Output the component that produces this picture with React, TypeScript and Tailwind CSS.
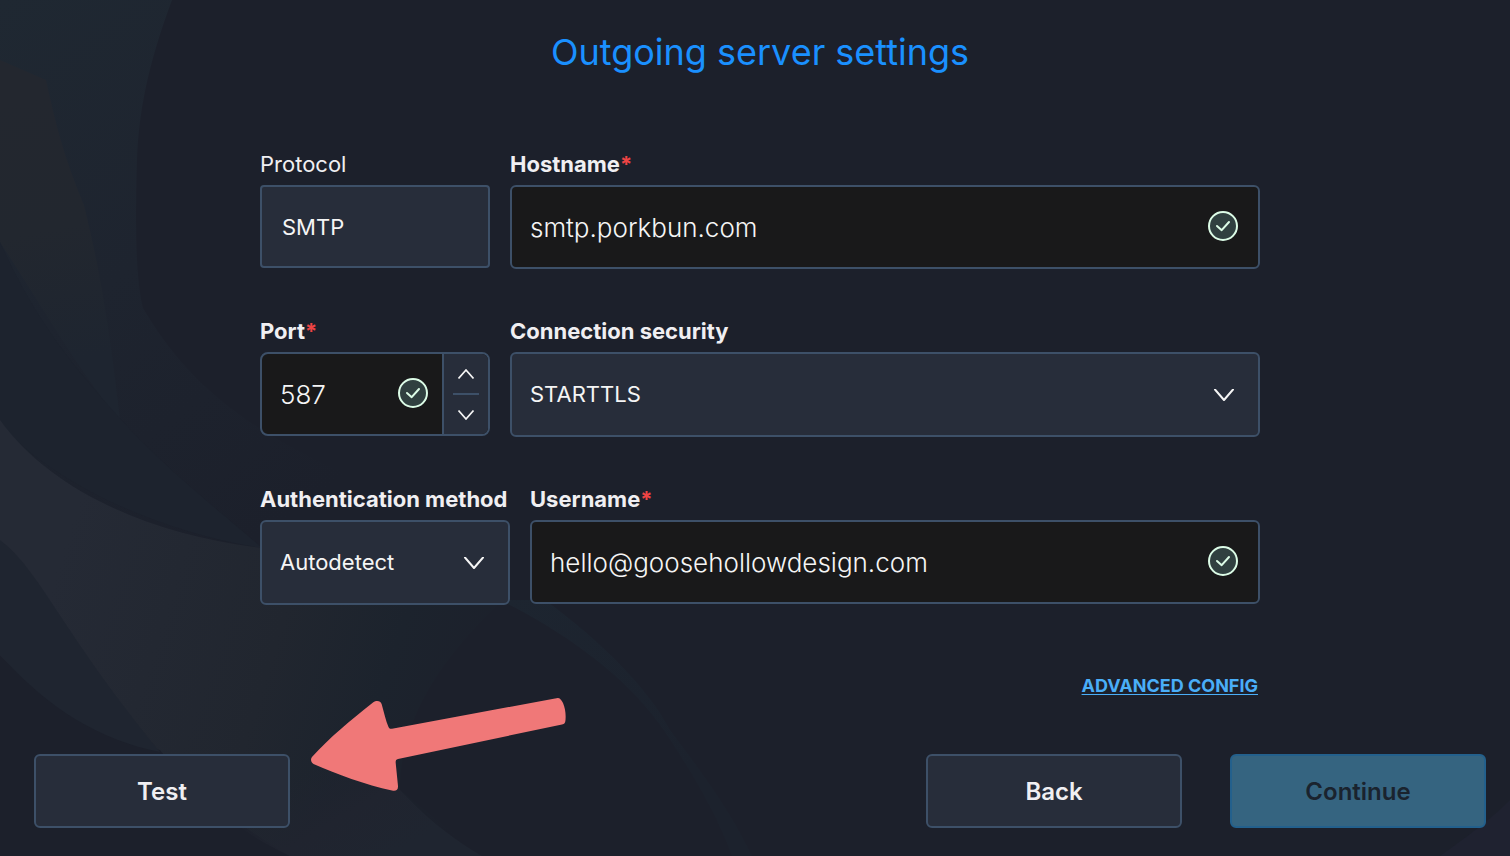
import { useState } from "react"
import type { ReactNode } from "react"

const fieldBox = "w-full rounded-md border-2 border-[#3d5068] text-[#f5f5f5] outline-none"
const textBox = `${fieldBox} h-[84px] bg-[#19191a] px-[18px] text-[26px] font-light`
const selectBox = `${fieldBox} h-[85px] appearance-none bg-[#272d3a] px-[18px] text-[22px]`
const footerButton =
  "h-[74px] w-64 rounded-md border-2 border-[#3d5068] bg-[#272d3a] pt-[2px] text-2xl font-semibold text-[#f0eff2]"

function Backdrop() {
  return (
    <svg
      className="pointer-events-none absolute inset-0 h-full w-full"
      viewBox="0 0 1510 856"
      preserveAspectRatio="none"
      aria-hidden="true"
    >
      <defs>
        <linearGradient id="upper" x1="0" y1="0" x2="340" y2="480" gradientUnits="userSpaceOnUse">
          <stop offset="0" stopColor="#1f2832" />
          <stop offset="0.5" stopColor="#1e242f" />
          <stop offset="1" stopColor="#1c202b" />
        </linearGradient>
        <linearGradient id="wing" x1="20" y1="100" x2="70" y2="360" gradientUnits="userSpaceOnUse">
          <stop offset="0" stopColor="#23272f" />
          <stop offset="0.5" stopColor="#22272f" />
          <stop offset="1" stopColor="#1e2530" />
        </linearGradient>
        <linearGradient id="lower" x1="60" y1="560" x2="500" y2="700" gradientUnits="userSpaceOnUse">
          <stop offset="0" stopColor="#252a35" />
          <stop offset="0.5" stopColor="#21262f" />
          <stop offset="0.75" stopColor="#1c232d" />
          <stop offset="1" stopColor="#1c202b" />
        </linearGradient>
        <linearGradient id="tail" x1="340" y1="750" x2="400" y2="850" gradientUnits="userSpaceOnUse">
          <stop offset="0" stopColor="#20242f" stopOpacity="0" />
          <stop offset="0.5" stopColor="#20242f" />
          <stop offset="1" stopColor="#1f2530" />
        </linearGradient>
        <linearGradient id="streak" x1="500" y1="605" x2="700" y2="760" gradientUnits="userSpaceOnUse">
          <stop offset="0" stopColor="#1d2530" />
          <stop offset="1" stopColor="#1c222d" />
        </linearGradient>
      </defs>
      <path
        d="M0 0H172C148 65 139 110 137 160C135 230 136 280 143 308C180 370 230 425 360 480L400 560H262C150 540 60 500 0 424Z"
        fill="url(#upper)"
      />
      <path d="M0 60L46 80C55 120 62 152 84 205C100 270 110 330 120 420C85 380 50 320 0 242Z" fill="url(#wing)" />
      <path d="M0 242C40 330 80 375 140 440C180 480 230 520 262 548C150 530 50 480 0 424Z" fill="#1d232e" />
      <path
        d="M0 420C50 490 150 535 262 548L500 603C440 660 400 720 400 790L482 856H290C240 825 200 800 160 750C110 740 60 715 0 655Z"
        fill="url(#lower)"
      />
      <path d="M240 740H350C375 762 390 780 400 790C430 822 455 840 482 856H290C270 846 255 838 240 827Z" fill="url(#tail)" />
      <path d="M0 540C40 570 60 630 160 752C100 740 50 710 0 655Z" fill="#1f2530" />
      <path
        d="M500 600L545 600C600 640 650 690 670 730C712 785 735 820 752 856H732C715 810 690 770 665 732C630 680 570 635 500 600Z"
        fill="url(#streak)"
      />
      <path d="M1440 856C1465 838 1490 820 1510 800V856Z" fill="#1f2230" />
    </svg>
  )
}

function ValidIcon({ className }: { className: string }) {
  return (
    <svg
      className={`pointer-events-none absolute h-8 w-8 ${className}`}
      viewBox="0 0 32 32"
      fill="none"
      stroke="#dcfce7"
      strokeWidth="2"
      strokeLinecap="round"
      strokeLinejoin="round"
      aria-hidden="true"
    >
      <circle cx="16" cy="16" r="14" fill="#304040" />
      <path d="M10 16L14.7 20.2L22 12" />
    </svg>
  )
}

function SelectArrow() {
  return (
    <svg
      className="pointer-events-none absolute right-[25px] top-[37px] h-3 w-[22px]"
      viewBox="0 0 22 12"
      fill="none"
      stroke="#f5f5f5"
      strokeWidth="2"
      strokeLinecap="round"
      strokeLinejoin="round"
      aria-hidden="true"
    >
      <path d="M2 0.5L11 11L20 0.5" />
    </svg>
  )
}

function StepArrow({ up }: { up?: boolean }) {
  return (
    <svg className="h-3 w-[18px]" viewBox="0 0 18 12" fill="none" stroke="#f5f5f5" strokeWidth="1.8" aria-hidden="true">
      <path d={up ? "M1.5 10.5L9 2L16.5 10.5" : "M1.5 1.5L9 10L16.5 1.5"} />
    </svg>
  )
}

type FieldProps = {
  id: string
  label: string
  required?: boolean
  light?: boolean
  className: string
  children: ReactNode
}

function Field({ id, label, required, light, className, children }: FieldProps) {
  return (
    <div className={className}>
      <label
        htmlFor={id}
        className={`mb-[5px] block whitespace-nowrap text-[22px] leading-8 text-[#f0eff2] ${light ? "font-normal" : "font-bold"}`}
      >
        {label}
        {required && <span className="text-[#ef4444]">*</span>}
      </label>
      <div className="relative">{children}</div>
    </div>
  )
}

export default function App() {
  const [hostname, setHostname] = useState("smtp.porkbun.com")
  const [port, setPort] = useState(587)
  const [username, setUsername] = useState("hello@goosehollowdesign.com")

  return (
    <div className="relative min-h-screen overflow-hidden bg-[#1c202b] font-['Inter',sans-serif]">
      <Backdrop />

      <main className="relative pb-7 pl-[34px] pr-6 pt-7">
        <h1 className="text-center text-4xl leading-[48px] text-[#1a90ff]">Outgoing server settings</h1>

        <form className="mx-auto mt-[72px] flex max-w-[1000px] flex-col gap-[46px]">
          <div className="flex gap-5">
            <Field id="protocol" label="Protocol" light className="w-[230px]">
              <input
                id="protocol"
                readOnly
                value="SMTP"
                className="h-[83px] w-full rounded-sm border-2 border-[#3d5068] bg-[#272d3a] px-5 text-[22px] text-[#f5f5f5] outline-none"
              />
            </Field>
            <Field id="hostname" label="Hostname" required className="flex-1">
              <input id="hostname" value={hostname} onChange={(e) => setHostname(e.target.value)} className={textBox} />
              <ValidIcon className="right-[21px] top-[25px]" />
            </Field>
          </div>

          <div className="flex gap-5">
            <Field id="port" label="Port" required className="w-[230px]">
              <div className="flex h-[84px] overflow-hidden rounded-lg border-2 border-[#3d5068] bg-[#19191a]">
                <div className="relative flex-1">
                  <input
                    id="port"
                    inputMode="numeric"
                    value={port}
                    onChange={(e) => setPort(Number(e.target.value) || 0)}
                    className="h-full w-full px-[18px] text-[26px] font-light text-[#f5f5f5] outline-none"
                  />
                  <ValidIcon className="right-[13px] top-[23px]" />
                </div>
                <div className="flex w-[46px] flex-col items-center border-l-2 border-[#3d5068] bg-[#272d3a]">
                  <button
                    type="button"
                    aria-label="Increase port"
                    onClick={() => setPort(port + 1)}
                    className="flex w-full flex-1 items-center justify-center"
                  >
                    <StepArrow up />
                  </button>
                  <span className="h-[2px] w-[26px] bg-[#3d5068]" />
                  <button
                    type="button"
                    aria-label="Decrease port"
                    onClick={() => setPort(port - 1)}
                    className="flex w-full flex-1 items-center justify-center"
                  >
                    <StepArrow />
                  </button>
                </div>
              </div>
            </Field>
            <Field id="security" label="Connection security" className="flex-1">
              <select id="security" className={selectBox}>
                <option>STARTTLS</option>
                <option>SSL/TLS</option>
                <option>None</option>
              </select>
              <SelectArrow />
            </Field>
          </div>

          <div className="flex gap-5">
            <Field id="auth" label="Authentication method" className="w-[250px]">
              <select id="auth" className={selectBox}>
                <option>Autodetect</option>
                <option>Normal password</option>
              </select>
              <SelectArrow />
            </Field>
            <Field id="username" label="Username" required className="flex-1">
              <input id="username" value={username} onChange={(e) => setUsername(e.target.value)} className={textBox} />
              <ValidIcon className="right-[21px] top-[25px]" />
            </Field>
          </div>
        </form>

        <div className="mx-auto mt-[69px] flex max-w-[1000px] justify-end pr-[2px]">
          <a
            href="#advanced"
            className="text-lg leading-6 font-bold text-[#4aaef8] underline decoration-1 underline-offset-2"
          >
            ADVANCED CONFIG
          </a>
        </div>

        <footer className="mt-14 flex items-center justify-between">
          <div className="relative">
            <button type="button" className={footerButton}>
              Test
            </button>
            {/* hand-drawn pointer to the Test button */}
            <svg
              className="pointer-events-none absolute bottom-9 left-[276px] h-[96px] w-[258px]"
              viewBox="310 696 258 96"
              aria-hidden="true"
            >
              <path
                d="M312 757C330 737 350 721 373 702.500C377 700 380.500 701 381.700 704.300C384 713 386 721 388.300 726.500C389 728.500 390 729 392 728.700L557.700 698C560 698 561.500 700 563 703C565.200 708 566 714 565.500 720C565.200 723 564.500 724 562 724.500L398 759C396 759.500 395.500 760.500 395.700 763L398 786C398.200 790 396 791.300 392 790.500C366 785 336 774 313.500 764C310.500 762 310.500 759 312 757Z"
                fill="#f07878"
              />
            </svg>
          </div>
          <div className="flex gap-12">
            <button type="button" className={footerButton}>
              Back
            </button>
            <button
              type="button"
              disabled
              className="h-[74px] w-64 rounded-md border-2 border-[#23608c] bg-[#356480] pt-[2px] text-2xl font-semibold text-[#1a232e]"
            >
              Continue
            </button>
          </div>
        </footer>
      </main>
    </div>
  )
}
